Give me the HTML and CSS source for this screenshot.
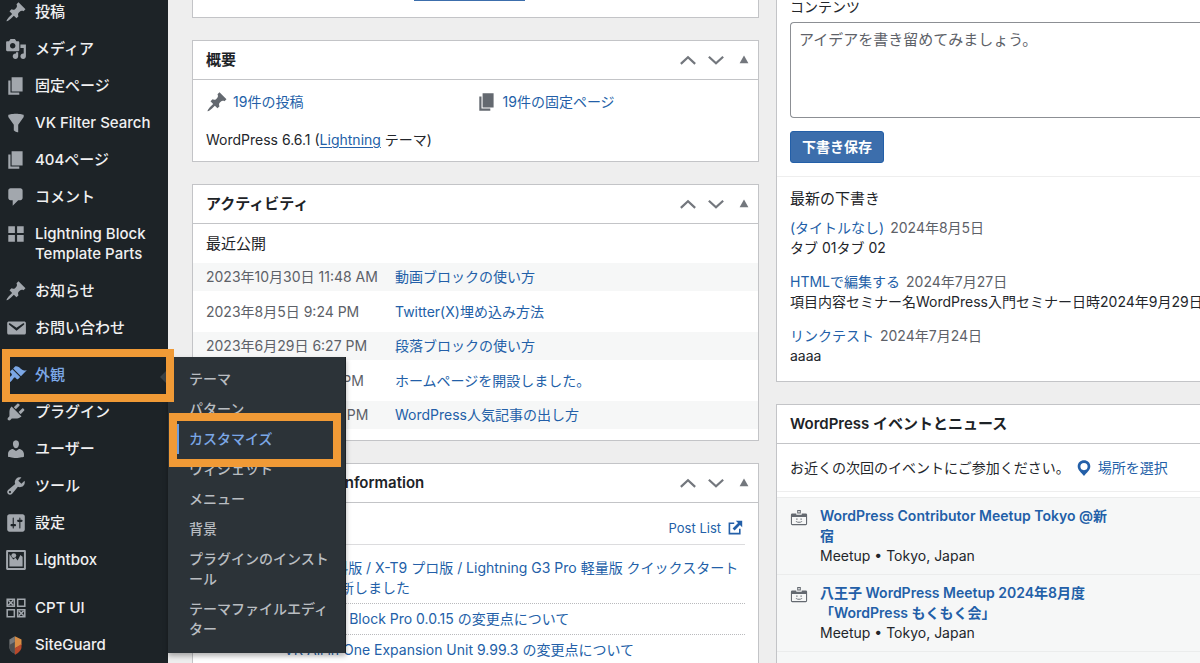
FILE: index.html
```html
<!DOCTYPE html>
<html lang="ja">
<head>
<meta charset="utf-8">
<meta name="viewport" content="width=device-width, initial-scale=1">
<title>ダッシュボード</title>
<link rel="stylesheet" href="styles.css">
</head>
<body>
<svg class="sprite" aria-hidden="true">
  <symbol id="pin" viewBox="0 0 20 20"><path d="M10.44 3.02l1.82-1.82 6.36 6.35-1.83 1.82c-1.05-.68-2.48-.57-3.41.36l-.75.75c-.92.93-1.04 2.35-.35 3.41l-1.83 1.82-2.41-2.41-2.8 2.79c-.42.42-3.38 2.71-3.8 2.29s1.86-3.39 2.28-3.81l2.79-2.79L4.1 9.36l1.83-1.82c1.05.69 2.48.57 3.4-.36l.75-.75c.93-.92 1.05-2.35.36-3.41z"/></symbol>
  <symbol id="media" viewBox="0 0 20 20"><path d="M13 11V4c0-.55-.45-1-1-1h-1.67L9 1H5L3.67 3H2c-.55 0-1 .45-1 1v7c0 .55.45 1 1 1h10c.55 0 1-.45 1-1zM7 4.5c1.38 0 2.5 1.12 2.5 2.5S8.38 9.5 7 9.5 4.5 8.38 4.5 7 5.62 4.5 7 4.5zM14 6h5v10.5c0 1.38-1.12 2.5-2.5 2.5S14 17.88 14 16.5s1.12-2.5 2.5-2.5c.17 0 .34.02.5.05V9h-3V6zm-4 8.05V13h2v3.5c0 1.38-1.12 2.5-2.5 2.5S7 17.88 7 16.5 8.12 14 9.5 14c.17 0 .34.02.5.05z"/></symbol>
  <symbol id="page" viewBox="0 0 20 20"><path d="M6 15V2h10v13H6zm-1 1h8v2H3V5h2v11z"/></symbol>
  <symbol id="filter" viewBox="0 0 20 20"><path d="M3 4.5v-2s3.34-1 7-1 7 1 7 1v2l-5 7.03v6.97s-1.22-.09-2.25-.59S8 16.5 8 16.5v-4.97z"/></symbol>
  <symbol id="comment" viewBox="0 0 20 20"><path d="M5 2h9c1.1 0 2 .9 2 2v7c0 1.1-.9 2-2 2h-2l-5 5v-5H5c-1.1 0-2-.9-2-2V4c0-1.1.9-2 2-2z"/></symbol>
  <symbol id="blocks" viewBox="0 0 20 20"><path d="M9 9V3H3v6h6zm8 0V3h-6v6h6zm-8 8v-6H3v6h6zm8 0v-6h-6v6h6z"/></symbol>
  <symbol id="mail" viewBox="0 0 20 20"><path d="M3.87 4h13.25C18.37 4 19 4.59 19 5.79v8.42c0 1.19-.63 1.79-1.88 1.79H3.87c-1.25 0-1.88-.6-1.88-1.79V5.79c0-1.2.63-1.79 1.88-1.79zm6.62 8.6l6.74-5.53c.24-.2.43-.66.13-1.07-.29-.41-.82-.42-1.17-.17l-5.7 3.86L4.8 5.83c-.35-.25-.88-.24-1.17.17-.3.41-.11.87.13 1.07z"/></symbol>
  <symbol id="brush" viewBox="0 0 20 20"><path d="M14.48 11.06L7.41 3.99l1.5-1.5c.5-.56 2.3-.47 3.51.32 1.21.8 1.43 1.28 2.91 2.1 1.18.64 2.45 1.26 4.45.85zm-.71.71L6.7 4.7 4.93 6.47c-.39.39-.39 1.02 0 1.41l1.06 1.06c.39.39.39 1.03 0 1.42-.6.6-1.43 1.11-2.21 1.69-.35.26-.7.53-1.01.84C1.43 14.23.4 16.08 1.4 17.07c.99 1 2.84-.03 4.18-1.36.31-.31.58-.66.85-1.02.57-.78 1.08-1.61 1.69-2.21.39-.39 1.02-.39 1.41 0l1.06 1.06c.39.39 1.02.39 1.41 0z"/></symbol>
  <symbol id="plug" viewBox="0 0 20 20"><path d="M13.11 4.36L9.87 7.6 8 5.73l3.24-3.24c.35-.34 1.05-.2 1.56.32.52.51.66 1.21.31 1.55zm-8 1.77l.91-1.12 9.01 9.01-1.19.84c-.71.71-2.63 1.16-3.82 1.16H6.14L4.9 17.26c-.59.59-1.54.59-2.12 0-.59-.58-.59-1.53 0-2.12l1.24-1.24v-3.88c0-1.13.4-3.19 1.09-3.89zm7.26 3.97l3.24-3.24c.34-.35 1.04-.21 1.55.31.52.51.66 1.21.31 1.55l-3.24 3.25z"/></symbol>
  <symbol id="user" viewBox="0 0 20 20"><path d="M10 9.25c-2.27 0-2.73-3.44-2.73-3.44C7 4.02 7.82 2 9.97 2c2.16 0 2.98 2.02 2.71 3.81 0 0-.41 3.44-2.68 3.44zm0 2.57L12.72 10c2.39 0 4.52 2.33 4.52 4.53v2.49s-3.65 1.13-7.24 1.13c-3.65 0-7.24-1.13-7.24-1.13v-2.49c0-2.25 1.94-4.48 4.47-4.48z"/></symbol>
  <symbol id="wrench" viewBox="0 0 20 20"><path d="M16.68 9.77c-1.34 1.34-3.3 1.67-4.95.99l-5.41 6.52c-.99.99-2.59.99-3.58 0s-.99-2.59 0-3.57l6.52-5.42c-.68-1.65-.35-3.61.99-4.95 1.28-1.28 3.12-1.62 4.72-1.06l-2.89 2.89 2.82 2.82 2.86-2.87c.53 1.58.18 3.39-1.08 4.65zM3.81 16.21c.4.39 1.04.39 1.43 0 .4-.4.4-1.04 0-1.43-.39-.4-1.03-.4-1.43 0-.39.39-.39 1.03 0 1.43z"/></symbol>
  <symbol id="settings" viewBox="0 0 20 20"><path d="M18 16V4c0-1.1-.9-2-2-2H4c-1.1 0-2 .9-2 2v12c0 1.1.9 2 2 2h12c1.1 0 2-.9 2-2zM8 11h1c.55 0 1 .45 1 1s-.45 1-1 1H8v1.5c0 .28-.22.5-.5.5s-.5-.22-.5-.5V13H6c-.55 0-1-.45-1-1s.45-1 1-1h1V5.500c0-.28.22-.5.5-.5s.5.22.5.5V11zm5-2h-1c-.55 0-1-.45-1-1s.45-1 1-1h1V5.500c0-.28.22-.5.5-.5s.5.22.5.5V7h1c.55 0 1 .45 1 1s-.45 1-1 1h-1v5.500c0 .28-.22.5-.5.5s-.5-.22-.5-.5V9z"/></symbol>
  <symbol id="lightbox" viewBox="0 0 20 20"><path fill-rule="evenodd" d="M2 1h16a1 1 0 0 1 1 1v16a1 1 0 0 1-1 1H2a1 1 0 0 1-1-1V2a1 1 0 0 1 1-1zm.8 1.800v14.400h14.400V2.800z"/><path d="M4 4.500l3.500 5L9.500 8l2 2.500L14 5.500l2 1.500v9H4z"/><circle cx="8" cy="6" r="2.200"/></symbol>
  <symbol id="cpt" viewBox="0 0 20 20"><g fill="none" stroke="currentColor" stroke-width="1.400"><path d="M2 2h6.500v6.500H2zM11.500 2H18v6.500h-6.500zM2 11.500h6.500V18H2zM11.500 11.500H18V18h-6.500z"/><path d="M3 3l4.500 4.500M7.500 3L3 7.500M12.500 12.500L17 17M17 12.500L12.500 17"/></g></symbol>
  <symbol id="guard" viewBox="0 0 20 20"><path fill="#77797b" d="M9 2v16c-3-1.500-5-3.500-5-6V5z"/><path fill="#4d4f51" d="M4 10l5-3v11c-3-1.500-5-3.500-5-6z"/><path fill="#d98d45" d="M9 2l6 3v5l-6 3z"/><path fill="#b9492b" d="M15 9v3c0 2.500-2.500 5-6 7v-6z"/></symbol>
  <symbol id="up" viewBox="0 0 20 20"><path fill="none" stroke="currentColor" stroke-width="2" d="M3.500 13.500L10 7.500l6.500 6"/></symbol>
  <symbol id="down" viewBox="0 0 20 20"><path fill="none" stroke="currentColor" stroke-width="2" d="M3.500 7L10 13l6.500-6"/></symbol>
  <symbol id="toggle" viewBox="0 0 20 20"><path d="M6 13l4-7 4 7z"/></symbol>
  <symbol id="external" viewBox="0 0 20 20"><path d="M9 3H2v15h15v-7h-2v5H4V5h5zM11 1h8v8l-2.800-2.800L9.500 13 7 10.500l6.800-6.700z"/></symbol>
  <symbol id="location" viewBox="0 0 20 20"><path fill-rule="evenodd" d="M10 1.500c4 0 7 2.900 7 6.700 0 4.300-4 6.300-7 10.800-3-4.500-7-6.500-7-10.800C3 4.400 6 1.500 10 1.500zM10 4.400a4 4 0 1 0 0 8 4 4 0 0 0 0-8z"/></symbol>
  <symbol id="badge" viewBox="0 0 20 20"><path fill-rule="evenodd" d="M8 1h4v4H8zM9.200 2.200v1.600h1.600V2.200zM2.500 5H7v1.500h6V5h4.500A1.500 1.500 0 0 1 19 6.500v10a1.500 1.500 0 0 1-1.500 1.500h-15A1.500 1.500 0 0 1 1 16.500v-10A1.500 1.500 0 0 1 2.500 5zM2.200 9v7.700h15.600V9z"/><path d="M7 10.500h1.300V12H7zM11.700 10.500H13V12h-1.300zM6.500 13.300q3.500 2 7 0v.9q-3.500 2-7 0z"/></symbol>
</svg>

<div class="layout">
  <nav class="sidebar" aria-label="メインメニュー">
    <ul class="menu">
      <li><a href="#"><svg class="icon"><use href="#pin"/></svg><span>投稿</span></a></li>
      <li><a href="#"><svg class="icon"><use href="#media"/></svg><span>メディア</span></a></li>
      <li><a href="#"><svg class="icon"><use href="#page"/></svg><span>固定ページ</span></a></li>
      <li><a href="#"><svg class="icon"><use href="#filter"/></svg><span>VK Filter Search</span></a></li>
      <li><a href="#"><svg class="icon"><use href="#page"/></svg><span>404ページ</span></a></li>
      <li><a href="#"><svg class="icon"><use href="#comment"/></svg><span>コメント</span></a></li>
      <li><a href="#"><svg class="icon"><use href="#blocks"/></svg><span>Lightning Block Template Parts</span></a></li>
      <li><a href="#"><svg class="icon"><use href="#pin"/></svg><span>お知らせ</span></a></li>
      <li><a href="#"><svg class="icon"><use href="#mail"/></svg><span>お問い合わせ</span></a></li>
      <li class="open">
        <a href="#"><svg class="icon"><use href="#brush"/></svg><span>外観</span></a>
        <ul class="submenu">
          <li><a href="#">テーマ</a></li>
          <li><a href="#">パターン</a></li>
          <li class="current"><a href="#">カスタマイズ</a><span class="marker marker-sub"></span></li>
          <li><a href="#">ウィジェット</a></li>
          <li><a href="#">メニュー</a></li>
          <li><a href="#">背景</a></li>
          <li><a href="#">プラグインのインストール</a></li>
          <li><a href="#">テーマファイルエディター</a></li>
        </ul>
        <span class="marker marker-main"></span>
      </li>
      <li><a href="#"><svg class="icon"><use href="#plug"/></svg><span>プラグイン</span></a></li>
      <li><a href="#"><svg class="icon"><use href="#user"/></svg><span>ユーザー</span></a></li>
      <li><a href="#"><svg class="icon"><use href="#wrench"/></svg><span>ツール</span></a></li>
      <li><a href="#"><svg class="icon"><use href="#settings"/></svg><span>設定</span></a></li>
      <li><a href="#"><svg class="icon"><use href="#lightbox"/></svg><span>Lightbox</span></a></li>
      <li class="group"><a href="#"><svg class="icon"><use href="#cpt"/></svg><span>CPT UI</span></a></li>
      <li><a href="#"><svg class="icon"><use href="#guard"/></svg><span>SiteGuard</span></a></li>
    </ul>
  </nav>

  <main class="content">
    <div class="column">
      <section class="panel panel-tail"><div class="button-edge"></div></section>

      <section class="panel">
        <header class="panel-head">
          <h2>概要</h2>
          <div class="tools">
            <button type="button" aria-label="上に移動"><svg><use href="#up"/></svg></button>
            <button type="button" aria-label="下に移動"><svg><use href="#down"/></svg></button>
            <button type="button" aria-label="パネルを閉じる"><svg><use href="#toggle"/></svg></button>
          </div>
        </header>
        <div class="glance">
          <ul class="counts">
            <li><svg class="icon"><use href="#pin"/></svg><a href="#">19件の投稿</a></li>
            <li><svg class="icon"><use href="#page"/></svg><a href="#">19件の固定ページ</a></li>
          </ul>
          <p>WordPress 6.6.1 (<a class="underlined" href="#">Lightning</a> テーマ)</p>
        </div>
      </section>

      <section class="panel">
        <header class="panel-head">
          <h2>アクティビティ</h2>
          <div class="tools">
            <button type="button" aria-label="上に移動"><svg><use href="#up"/></svg></button>
            <button type="button" aria-label="下に移動"><svg><use href="#down"/></svg></button>
            <button type="button" aria-label="パネルを閉じる"><svg><use href="#toggle"/></svg></button>
          </div>
        </header>
        <div class="activity">
          <h3>最近公開</h3>
          <ul>
            <li><span>2023年10月30日 11:48 AM</span><a href="#">動画ブロックの使い方</a></li>
            <li><span>2023年8月5日 9:24 PM</span><a href="#">Twitter(X)埋め込み方法</a></li>
            <li><span>2023年6月29日 6:27 PM</span><a href="#">段落ブロックの使い方</a></li>
            <li><span>2023年6月21日 5:57 PM</span><a href="#">ホームページを開設しました。</a></li>
            <li><span>2023年6月20日 6:06 PM</span><a href="#">WordPress人気記事の出し方</a></li>
          </ul>
        </div>
      </section>

      <section class="panel">
        <header class="panel-head">
          <h2>Vektor WordPress Information</h2>
          <div class="tools">
            <button type="button" aria-label="上に移動"><svg><use href="#up"/></svg></button>
            <button type="button" aria-label="下に移動"><svg><use href="#down"/></svg></button>
            <button type="button" aria-label="パネルを閉じる"><svg><use href="#toggle"/></svg></button>
          </div>
        </header>
        <div class="news">
          <div class="news-top"><a href="#">Post List <svg><use href="#external"/></svg></a></div>
          <ul>
            <li><a href="#">X-T9 無料版 / X-T9 プロ版 / Lightning G3 Pro 軽量版 クイックスタート<br>内容を更新しました</a></li>
            <li><a href="#">Lightning Block Pro 0.0.15 の変更点について</a></li>
            <li><a href="#">VK All in One Expansion Unit 9.99.3 の変更点について</a></li>
          </ul>
        </div>
      </section>
    </div>

    <div class="column column-edge">
      <section class="panel panel-draft">
        <form class="draft-form">
          <label for="draft">コンテンツ</label>
          <textarea id="draft" placeholder="アイデアを書き留めてみましょう。"></textarea>
          <button type="button">下書き保存</button>
        </form>
        <div class="drafts">
          <h3>最新の下書き</h3>
          <ul>
            <li><a href="#">(タイトルなし)</a><time>2024年8月5日</time><p>タブ 01タブ 02</p></li>
            <li><a href="#">HTMLで編集する</a><time>2024年7月27日</time><p>項目内容セミナー名WordPress入門セミナー日時2024年9月29日</p></li>
            <li><a href="#">リンクテスト</a><time>2024年7月24日</time><p>aaaa</p></li>
          </ul>
        </div>
      </section>

      <section class="panel">
        <header class="panel-head"><h2>WordPress イベントとニュース</h2></header>
        <div class="nearby">
          <span>お近くの次回のイベントにご参加ください。</span>
          <a href="#"><svg><use href="#location"/></svg>場所を選択</a>
        </div>
        <ul class="events">
          <li><svg><use href="#badge"/></svg><div><a href="#">WordPress Contributor Meetup Tokyo @新宿</a><p>Meetup • Tokyo, Japan</p></div></li>
          <li><svg><use href="#badge"/></svg><div><a href="#">八王子 WordPress Meetup 2024年8月度<br>「WordPress もくもく会」</a><p>Meetup • Tokyo, Japan</p></div></li>
          <li></li>
        </ul>
      </section>
    </div>
  </main>
</div>
</body>
</html>
```
FILE: styles.css
```css
* { box-sizing: border-box; margin: 0; padding: 0; }

body {
  height: 100vh;
  overflow: hidden;
  background: #eeeeee;
  color: #23262b;
  font: 14px/20px Inter, "Noto Sans CJK JP", sans-serif;
}

ul { list-style: none; }
a { color: #235fa8; text-decoration: none; }
svg { flex: none; fill: currentColor; }
button, textarea { font: inherit; }
.sprite { display: none; }
.icon { width: 22px; height: 22px; }

.layout { display: flex; height: 100vh; overflow: hidden; }

/* Sidebar */
.sidebar {
  position: relative;
  z-index: 2;
  flex: none;
  width: 168px;
  background: #1d2327;
}
.menu { display: flex; flex-direction: column; gap: 1px; margin-top: -6px; }
.menu > li { position: relative; }
.menu > .group { margin-top: 11px; }
.menu > li > a {
  display: flex;
  gap: 8px;
  padding: 8px 14px 8px 5px;
  color: #f0f0f1;
  font-size: 15px;
  font-weight: 500;
}
.menu > li > a > .icon { margin: -1px 0; color: #a2a7ad; }
.menu > .open { z-index: 1; margin-top: 10px; }
.menu > .open > a, .menu > .open > a > .icon { color: #7ba7e6; }
.open::after {
  content: "";
  position: absolute;
  top: 12px;
  right: 0;
  border: 8px solid transparent;
  border-left: 0;
  border-right-color: #3a4146;
}

.submenu {
  position: absolute;
  z-index: 1;
  top: 0;
  left: 168px;
  width: 178px;
  padding: 7px 0 9px;
  background: #2c3338;
  box-shadow: 0 3px 5px rgba(0, 0, 0, .3);
  border-right: 1px solid #1b2024;
}
.submenu li { position: relative; }
.submenu a { display: block; padding: 5px 14px 5px 21px; color: #b9bdc1; font-weight: 500; word-break: break-all; line-break: anywhere; }
.submenu .current { z-index: 1; }
.submenu .current a { margin-left: 8px; padding-left: 13px; color: #7ba7e6; box-shadow: inset 3px 0 #6b9de0; }

/* Highlight frames drawn over the menu */
.marker { position: absolute; z-index: 2; border: 8px solid #f09a36; pointer-events: none; }
.marker-main { inset: -8px -6px -9px 2px; }
.marker-sub { inset: -11px 4px -13px 1px; }

/* Dashboard columns */
.content {
  flex: 1;
  min-width: 0;
  display: grid;
  grid-template-columns: minmax(0, 567fr) minmax(0, 424fr);
  align-items: start;
  gap: 17px;
  padding-left: 24px;
}
.column { display: flex; flex-direction: column; gap: 22px; }
.panel { background: #fff; border: 1px solid #c3c4c7; }
.column-edge .panel { border-right: 0; }
.panel-tail { height: 18px; border-top: 0; padding-right: 12px; }
.button-edge { width: 111px; height: 1px; margin: 0 auto; background: #3c6eac; }

.panel-head {
  display: flex;
  align-items: center;
  justify-content: space-between;
  height: 39px;
  padding-left: 13px;
  border-bottom: 1px solid #c3c4c7;
}
.panel-head h2 { color: #1d2327; font-size: 15px; font-weight: 600; }
.tools { display: flex; }
.tools button { display: flex; justify-content: center; align-items: center; width: 28px; height: 28px; border: 0; background: none; color: #73777d; }
.tools svg { width: 22px; height: 22px; }

.glance { padding: 11px 13px; }
.counts { display: grid; grid-template-columns: 1fr 1fr; margin-bottom: 17px; }
.counts li { display: flex; align-items: center; gap: 5px; }
.counts .icon { color: #646970; }
.underlined { text-decoration: underline; text-underline-offset: 2px; }

.activity { padding: 10px 0 11px; }
.activity h3, .drafts h3 { font-size: 15px; font-weight: 400; color: #1d2327; }
.activity h3 { padding: 0 13px 9px; }
.activity li { display: grid; grid-template-columns: 189px 1fr; align-items: center; height: 41px; padding: 0 13px; }
.activity li:nth-child(odd) { height: 28px; background: #f6f7f7; }
.activity span, .drafts time { color: #5d6168; }

.news { padding: 15px 13px; }
.news-top { display: flex; justify-content: flex-end; padding-bottom: 6px; border-bottom: 1px solid #dcdcde; font-size: 13px; }
.news-top a { display: flex; align-items: center; gap: 6px; }
.news-top svg { width: 16px; height: 16px; margin-right: 2px; }
.news ul { padding-top: 8px; }
.news li { padding: 5px 0 5px 78px; border-bottom: 1px dotted #b9babd; white-space: nowrap; }

/* Quick draft */
.panel-draft { border-top: 0; }
.draft-form { display: flex; flex-direction: column; align-items: flex-start; padding: 0 0 13px 13px; border-bottom: 1px solid #eeeeee; }
.draft-form label { margin-top: -3px; margin-bottom: 5px; }
.draft-form textarea {
  width: 100%;
  height: 96px;
  margin-bottom: 13px;
  padding: 7px 8px;
  border: 1px solid #8c8f94;
  border-right: 0;
  border-radius: 4px 0 0 4px;
  background: #fff;
  font-size: 15px;
  line-height: 20px;
  resize: none;
}
.draft-form textarea::placeholder { color: #5d6168; }
.draft-form button { height: 32px; padding: 0 11px; border: 1px solid #235fa8; border-radius: 3px; background: #3c6eac; color: #fff; font-weight: 600; }
.drafts { padding: 12px 0 15px 13px; white-space: nowrap; overflow: hidden; }
.drafts h3 { margin-bottom: 9px; }
.drafts ul { display: grid; gap: 14px; }
.drafts time { margin-left: 6px; }

/* Events */
.nearby { display: flex; align-items: center; gap: 5px; padding: 14px 13px 13px; border-bottom: 1px solid #eeeeee; white-space: nowrap; }
.nearby a { display: flex; align-items: center; gap: 5px; }
.nearby svg { width: 18px; height: 18px; }
.events { margin-top: 5px; background: #f6f7f7; }
.events li { display: flex; gap: 12px; min-height: 77px; padding: 8px 13px; border-top: 1px solid #ebecec; }
.events svg { width: 18px; height: 18px; margin-top: 3px; color: #646970; }
.events div { max-width: 292px; }
.events a { font-weight: 600; }
```
